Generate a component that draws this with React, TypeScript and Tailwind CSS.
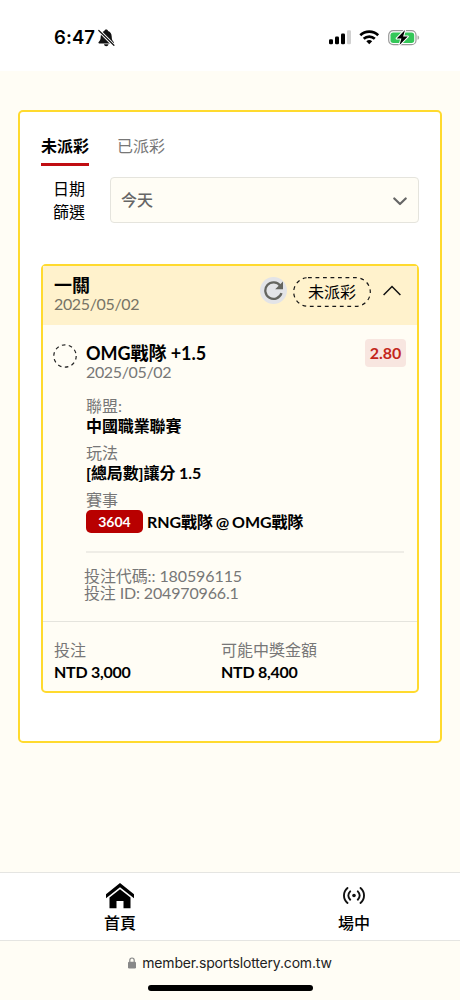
import type { ReactNode } from 'react';

const latoStack = "font-['Lato','Noto_Sans_CJK_TC',sans-serif]";

function StatusBar() {
  return (
    <header className="flex h-[71px] shrink-0 items-start justify-between bg-white pt-[27px] pr-[40px] pl-[54px]">
      <div className="flex h-[21px] items-center gap-[3px]">
        <span className="font-['Inter',sans-serif] text-[18.5px] leading-[21px] font-semibold tracking-[0.1px] text-black">6:47</span>
        <svg width="17" height="18" viewBox="0 0 17 18" fill="#111">
          <path d="M8.200 .6C7.200 .6 6.500 1.200 6.400 2 4 2.800 2.800 4.900 2.700 7.400c0 3.300-.8 4.300-2 5.500-.6.700-.2 1.500.6 1.500h13.800c.8 0 1.200-.8.6-1.500-1.200-1.200-2-2.200-2-5.500-.1-2.500-1.300-4.600-3.700-5.400C9.900 1.200 9.200.600 8.200.600z" />
          <path d="M6 15.300h4.500c-.2 1.200-1.100 2-2.250 2S6.200 16.500 6 15.300z" />
          <path d="M0.800 1.300 15.800 16.300" stroke="#fff" strokeWidth="3.200" />
          <path d="M0.800 1.500 15.900 16.300" stroke="#111" strokeWidth="1.200" strokeLinecap="round" />
        </svg>
      </div>
      <div className="flex h-[21px] items-center">
        <svg width="22" height="15" viewBox="0 0 22 15">
          <rect x="0" y="9.300" width="4" height="5" rx="1.200" />
          <rect x="6" y="6.500" width="4" height="7.800" rx="1.200" />
          <rect x="12" y="3.500" width="4" height="10.800" rx="1.200" />
          <rect x="18" y="0.300" width="4" height="14" rx="1.200" fill="#d0d0d0" />
        </svg>
        <svg className="ml-[8px]" width="21" height="15" viewBox="0 0 21 15" fill="none" stroke="#000" strokeWidth="2.700">
          <path d="M1.300 5.200C6.300.500 14.200.500 19.200 5.200" />
          <path d="M4.700 8.800c3.200-2.900 7.900-2.900 11.100 0" />
          <path d="M7.300 11.200c1.800-1.500 4.100-1.500 5.900 0l-2.950 3.100z" fill="#000" stroke="none" />
        </svg>
        <svg className="ml-[8px]" width="32" height="17" viewBox="0 0 32 17">
          <rect x="0.700" y="1.700" width="27.300" height="14" rx="4.500" fill="#fff" stroke="#999" strokeWidth="1.200" />
          <rect x="2.500" y="3.500" width="23.700" height="10.400" rx="2.700" fill="#34c759" />
          <path d="M29.500 6.500c2.200.700 2.200 3.600 0 4.300z" fill="#aaa" />
          <path d="M17 1 8.700 9.500h4.700L11.500 16l8.300-8.500h-4.700z" fill="#000" stroke="#fff" strokeWidth="2" paintOrder="stroke" strokeLinejoin="round" />
        </svg>
      </div>
    </header>
  );
}

function Tabs() {
  return (
    <div className="flex h-[34px] gap-[28px] text-[16px] leading-[28px]">
      <div className="w-[48px] border-b-[3px] border-[#c00d12] font-bold whitespace-nowrap text-black">未派彩</div>
      <div className="text-[#777]">已派彩</div>
    </div>
  );
}

function DateFilter() {
  return (
    <div className="mt-[11px] flex h-[46px]">
      <div className="w-[69px] pl-[12px] text-[16px] leading-[23px] text-black">
        <div>日期</div>
        <div>篩選</div>
      </div>
      <div className="flex flex-1 items-center justify-between rounded-[4px] border border-[#e5e4dd] bg-[#fffdf5] pr-[11px] pl-[10px]">
        <span className="text-[16px] leading-[24px] font-medium text-[#666]">今天</span>
        <svg className="mt-[2px]" width="14" height="9" viewBox="0 0 14 9" fill="none" stroke="#666" strokeWidth="2.200" strokeLinecap="round" strokeLinejoin="round">
          <path d="m1.300 1.500 5.700 5.500 5.700-5.500" />
        </svg>
      </div>
    </div>
  );
}

function Detail({ label, children }: { label: string; children: ReactNode }) {
  return (
    <div className="h-[47px] text-[16px]">
      <div className="h-[19px] leading-[17px] text-[#777]">{label}</div>
      <div className="flex h-[20px] items-center leading-[20px] font-bold tracking-[-0.1px] whitespace-nowrap text-black">{children}</div>
    </div>
  );
}

function BetCard() {
  return (
    <section className="mt-[41px] h-[429px] rounded-[5px] border-2 border-[#ffda2e] bg-[#fffdf5]">
      <div className="flex h-[59px] items-start bg-[#fff2cc] pt-[10px] pr-[16px] pl-[11px]">
        <div className="flex-1">
          <div className="h-[19px] text-[18px] leading-[19px] font-bold text-black">一關</div>
          <div className="h-[18px] text-[16px] leading-[18px] tracking-[-0.35px] text-[#777466]">2025/05/02</div>
        </div>
        <div className="mt-px flex size-[27px] items-center justify-center rounded-full bg-[#e3e4e7]">
          <svg width="21" height="21" viewBox="0 0 21 21" fill="none">
            <path d="M17.300 5.700A8.300 8.300 0 1 0 18.500 13.200" stroke="#64655f" strokeWidth="2.300" />
            <path d="M20 1.500v7.800h-7.800z" fill="#64655f" />
          </svg>
        </div>
        <div className="mt-px ml-[6px] flex h-[30px] w-[78px] items-center justify-center">
          <svg className="absolute" width="78" height="30" viewBox="0 0 78 30" fill="none">
            <rect x="0.700" y="0.700" width="76.600" height="28.600" rx="14.300" stroke="#171717" strokeWidth="1.200" strokeDasharray="3.800 3.700" />
          </svg>
          <span className="text-[16px] leading-[24px] text-black">未派彩</span>
        </div>
        <svg className="mt-[9px] ml-[12px]" width="18" height="11" viewBox="0 0 18 11" fill="none" stroke="#111" strokeWidth="1.500">
          <path d="m.600 10 8.400-8.500 8.400 8.500" />
        </svg>
      </div>

      <div className="flex h-[79px] pt-[14px] pr-[11px] pl-[10px]">
        <svg className="mt-[5px]" width="24" height="24" viewBox="0 0 24 24" fill="none">
          <circle cx="12" cy="12" r="11.200" stroke="#222" strokeWidth="1.200" strokeDasharray="3.600 3.437" />
        </svg>
        <div className="ml-[9px] flex-1">
          <div className="h-[20px] text-[18px] leading-[28px] font-bold tracking-[-0.05px] text-black">OMG戰隊 +1.5</div>
          <div className="h-[18px] text-[16px] leading-[26px] tracking-[-0.35px] text-[#777]">2025/05/02</div>
        </div>
        <div className="flex h-[28px] w-[41px] justify-center rounded-[4px] bg-[#f8e6e0] text-[16px] leading-[28px] font-bold text-[#c3261c]">2.80</div>
      </div>

      <div className="-mt-[7px] ml-[43px] h-[156px] w-[318px] border-b-2 border-[#efede6]">
        <Detail label="聯盟:">中國職業聯賽</Detail>
        <Detail label="玩法">[總局數]讓分 1.5</Detail>
        <Detail label="賽事">
          <span className="mt-[3px] h-[23px] w-[57px] shrink-0 rounded-[5px] bg-[#b80000] text-center text-[14px] leading-[23px] tracking-normal text-white">3604</span>
          <span className="mt-[4px] ml-[4px] [word-spacing:-0.8px]">RNG戰隊 @ OMG戰隊</span>
        </Detail>
      </div>

      <div className="h-[69px] border-b border-[#e5e4dd] pt-[14px] pl-[41px] text-[16px] leading-[17px] tracking-[-0.1px] text-[#777]">
        <div>投注代碼:: 180596115</div>
        <div className="tracking-[-0.15px]">投注 ID: 204970966.1</div>
      </div>

      <div className="grid grid-cols-[167px_1fr] pt-[17px] pl-[11px] text-[16px] leading-[22px]">
        <div>
          <div className="text-[#777]">投注</div>
          <div className="font-bold tracking-[-0.25px] text-black">NTD 3,000</div>
        </div>
        <div>
          <div className="text-[#777]">可能中獎金額</div>
          <div className="font-bold tracking-[-0.25px] text-black">NTD 8,400</div>
        </div>
      </div>
    </section>
  );
}

function BottomNav() {
  return (
    <nav className="flex h-[69px] shrink-0 justify-between border-y border-[#e5e5e2] bg-white px-[89px] pt-[10px] text-[16px] font-medium text-black">
      <div className="flex w-[62px] flex-col items-center">
        <svg width="28" height="26" viewBox="0 0 28 26">
          <path d="M14 0 0 11.200v4L14 4.300l14 10.900v-4z" />
          <path d="M14 6.300 3.500 14.500v10.800h7V18h7v7.300h7V14.500z" />
        </svg>
        <span className="mt-[2px] leading-[24px]">首頁</span>
      </div>
      <div className="-mr-[14px] flex w-[62px] flex-col items-center">
        <svg className="mt-[4px]" width="22" height="17" viewBox="0 0 22 17" fill="none" stroke="#111" strokeWidth="1.900" strokeLinecap="round">
          <path d="M4.500 1C-.200 5-.200 12 4.500 16M17.500 1c4.700 4 4.700 11 0 15M7.200 4.300c-2.500 2.500-2.500 6 0 8.400M14.800 4.300c2.500 2.500 2.500 6 0 8.400" />
          <circle cx="11" cy="8.500" r="1.800" fill="#111" stroke="none" />
        </svg>
        <span className="mt-[7px] leading-[24px]">場中</span>
      </div>
    </nav>
  );
}

export default function App() {
  return (
    <div className={`flex h-[1000px] w-[460px] flex-col overflow-hidden bg-[#fffdf5] ${latoStack}`}>
      <StatusBar />
      <main className="flex-1 px-[18px] pt-[39px]">
        <div className="h-[633px] w-[424px] rounded-[5px] border-2 border-[#ffda2e] bg-white pt-[20px] pr-[21px] pl-[21px]">
          <Tabs />
          <DateFilter />
          <BetCard />
        </div>
      </main>
      <BottomNav />
      <footer className="flex h-[59px] shrink-0 flex-col items-center pt-[10px]">
        <div className="flex items-center gap-[6px] font-['Inter',sans-serif] text-[14px] leading-[23px] tracking-[-0.16px] text-[#222]">
          <svg width="8" height="12" viewBox="0 0 8 12" fill="#888">
            <path d="M1.800 5V3.200a2.200 2.200 0 0 1 4.400 0V5" fill="none" stroke="#888" strokeWidth="1.200" />
            <rect y="4.800" width="8" height="6.700" rx="1.200" />
          </svg>
          member.sportslottery.com.tw
        </div>
        <div className="mt-[11px] h-[6px] w-[165px] rounded-full bg-black" />
      </footer>
    </div>
  );
}
